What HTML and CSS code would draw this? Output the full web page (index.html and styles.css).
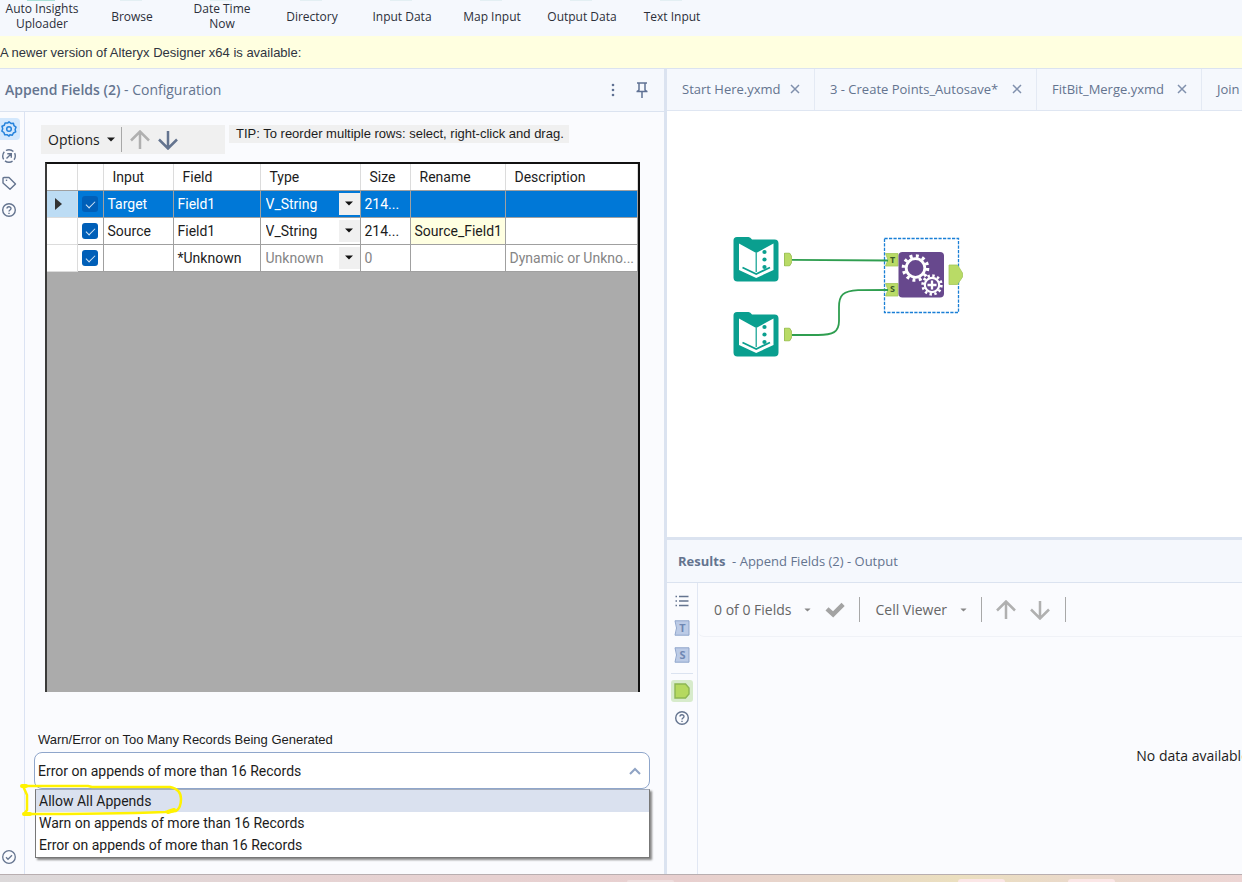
FILE: index.html
```html
<!DOCTYPE html>
<html lang="en">
<head>
<meta charset="utf-8">
<title>Alteryx Designer x64</title>
<link rel="stylesheet" href="styles.css">
</head>
<body>
<svg class="symbols" aria-hidden="true">
  <symbol id="close" viewBox="0 0 10 10"><path d="M1 1l8 8M9 1l-8 8" fill="none" stroke="currentColor" stroke-width="1.5"/></symbol>
  <symbol id="help" viewBox="0 0 16 16"><circle cx="8" cy="8" r="6.3" fill="none" stroke="currentColor" stroke-width="1.4"/><path d="M6 6.600C6 4.200 10 4.200 10 6.500C10 8 8 7.900 8 9.600M8 10.700v1.400" fill="none" stroke="currentColor" stroke-width="1.400"/></symbol>
  <symbol id="caret" viewBox="0 0 8 5"><path d="M0 .5h8L4 4.500z" fill="currentColor"/></symbol>
  <symbol id="up" viewBox="0 0 20 20"><path d="M10 19V1.500M1 10.500l9-9 9 9" fill="none" stroke="currentColor" stroke-width="2.500"/></symbol>
  <symbol id="down" viewBox="0 0 20 20"><path d="M10 1v17.500M1 9.500l9 9 9-9" fill="none" stroke="currentColor" stroke-width="2.500"/></symbol>
  <symbol id="anchor" viewBox="0 0 8 14"><path d="M.5 .5h5l2.500 4v5l-2.500 4h-5z" fill="#b9db66" stroke="#9cc05a"/></symbol>
  <symbol id="book" viewBox="0 0 46 46">
    <path d="M.5 4.500Q.5 1 4 1H15.500q2 0 3.500 2.500H41.500Q45.500 3.500 45.500 7.500V41.500Q45.500 45.500 41.500 45.500H4.500Q.5 45.500 .5 41.500z" fill="#0a9f8f"/>
    <path d="M6 7.500L23.200 17 40.500 7.500V34L23.200 42 6 34z" fill="#fff"/>
    <path d="M9.500 31.500L23.200 38 37 31.500" fill="none" stroke="#0a9f8f" stroke-width="1.800"/>
    <path d="M23.200 17v19" stroke="#0a9f8f" stroke-width="1.200"/>
    <g fill="#0a9f8f"><circle cx="31.500" cy="16" r="2.100"/><circle cx="31.500" cy="23.500" r="2.100"/><circle cx="31.500" cy="31" r="2.100"/></g>
  </symbol>
</svg>

<nav class="tools">
  <button class="tool tool-main">Auto Insights Uploader</button>
  <button class="tool">Browse</button>
  <button class="tool">Date Time<br>Now</button>
  <button class="tool">Directory</button>
  <button class="tool">Input Data</button>
  <button class="tool">Map Input</button>
  <button class="tool">Output Data</button>
  <button class="tool">Text Input</button>
</nav>
<p class="notice">A newer version of Alteryx Designer x64 is available:</p>

<main class="workspace">
  <section class="config">
    <header class="panel-head">
      <h1><b>Append Fields (2)</b> - Configuration</h1>
      <button class="icon-btn" aria-label="More"><svg width="4" height="14" viewBox="0 0 4 14" fill="#5f7194"><circle cx="2" cy="2" r="1.300"/><circle cx="2" cy="7" r="1.300"/><circle cx="2" cy="12" r="1.300"/></svg></button>
      <button class="icon-btn" aria-label="Pin"><svg width="14" height="18" viewBox="0 0 14 18" fill="none" stroke="#5f7194" stroke-width="1.500"><path d="M2 2h10M4 2v7.500M10 2v7.500M1.500 10.500h11M7 10.500V17M4 9l-2 1.500M10 9l2 1.500"/></svg></button>
    </header>
    <div class="config-body">
      <nav class="rail">
        <button class="rail-btn active" aria-label="Configuration"><svg width="16" height="16" viewBox="0 0 16 16" fill="none" stroke="currentColor" stroke-width="1.500" stroke-linejoin="round"><path d="M8 .9l1.900 1.500 2.500-.1.600 2.400 2 1.500-.9 2.300.6 2.400-2.300 1.100-1.100 2.200-2.500-.4L8 15.100l-1.900-1.400-2.400.1-.8-2.300-2-1.400.8-2.400-.7-2.400 2.300-1.100.8-2.300 2.500.2z"/><circle cx="8" cy="8" r="2.300"/></svg></button>
        <button class="rail-btn" aria-label="Navigation"><svg width="16" height="16" viewBox="0 0 16 16" fill="none" stroke="currentColor" stroke-width="1.400"><circle cx="8" cy="8" r="6.300" stroke-dasharray="8 1.900" stroke-dashoffset="4"/><path d="M5.500 10.500l4.500-4.500M6.300 5.700h4v4"/></svg></button>
        <button class="rail-btn" aria-label="Annotation"><svg width="16" height="16" viewBox="0 0 16 16" fill="none" stroke="currentColor" stroke-width="1.400" stroke-linejoin="round"><path d="M2 3.500Q2 2.500 3 2.500h5L14.500 9 9 14.300 2 8z"/><path d="M4.800 5.300h1.400"/></svg></button>
        <button class="rail-btn" aria-label="Help"><svg width="16" height="16"><use href="#help"/></svg></button>
        <button class="rail-btn rail-last" aria-label="Status"><svg width="16" height="16" viewBox="0 0 16 16" fill="none" stroke="currentColor" stroke-width="1.300"><circle cx="8" cy="8" r="6.300"/><path d="M5 8.300l2 2 4-4"/></svg></button>
      </nav>
      <div class="form">
        <div class="grid-tools">
          <div class="strip">
            <button class="options">Options <svg width="8" height="5"><use href="#caret"/></svg></button>
            <i class="sep"></i>
            <button class="icon-btn off" aria-label="Move up"><svg width="20" height="20"><use href="#up"/></svg></button>
            <button class="icon-btn" aria-label="Move down"><svg width="20" height="20"><use href="#down"/></svg></button>
          </div>
          <p class="tip">TIP: To reorder multiple rows: select, right-click and drag.</p>
        </div>
        <div class="grid-box">
          <table class="fields">
            <colgroup><col class="c-mark"><col class="c-check"><col class="c-input"><col class="c-field"><col class="c-type"><col class="c-size"><col class="c-rename"><col></colgroup>
            <thead><tr><th></th><th></th><th>Input</th><th>Field</th><th>Type</th><th>Size</th><th>Rename</th><th>Description</th></tr></thead>
            <tbody>
              <tr class="selected">
                <td class="mark"><svg width="7" height="12" viewBox="0 0 7 12"><path d="M0 0l7 6-7 6z" fill="#333"/></svg></td>
                <td class="tick"><input type="checkbox" checked aria-label="Include Target Field1"></td>
                <td>Target</td><td>Field1</td>
                <td class="type"><span class="combo"><select aria-label="Type of Target Field1"><option>V_String</option></select><i><svg width="8" height="5"><use href="#caret"/></svg></i></span></td>
                <td>214...</td><td></td><td></td>
              </tr>
              <tr>
                <td class="mark"></td>
                <td class="tick"><input type="checkbox" checked aria-label="Include Source Field1"></td>
                <td>Source</td><td>Field1</td>
                <td class="type"><span class="combo"><select aria-label="Type of Source Field1"><option>V_String</option></select><i><svg width="8" height="5"><use href="#caret"/></svg></i></span></td>
                <td>214...</td><td class="renamed">Source_Field1</td><td></td>
              </tr>
              <tr class="unknown">
                <td class="mark"></td>
                <td class="tick"><input type="checkbox" checked aria-label="Include Unknown"></td>
                <td></td><td class="dark">*Unknown</td>
                <td class="type"><span class="combo"><select aria-label="Type of Unknown"><option>Unknown</option></select><i><svg width="8" height="5"><use href="#caret"/></svg></i></span></td>
                <td>0</td><td></td><td>Dynamic or Unkno...</td>
              </tr>
            </tbody>
          </table>
        </div>
        <div class="warn">
          <label for="warn">Warn/Error on Too Many Records Being Generated</label>
          <div class="warn-field">
            <select id="warn"><option>Error on appends of more than 16 Records</option></select>
            <svg width="12" height="8" viewBox="0 0 12 8"><path d="M1 7l5-5 5 5" fill="none" stroke="#8fa3c4" stroke-width="2"/></svg>
          </div>
          <ul class="warn-list" role="listbox" aria-label="Warn/Error choices">
            <li role="option" aria-selected="true">Allow All Appends</li>
            <li role="option" aria-selected="false">Warn on appends of more than 16 Records</li>
            <li role="option" aria-selected="false">Error on appends of more than 16 Records</li>
          </ul>
          <svg class="marker" width="164" height="36" viewBox="0 0 164 36" fill="none" stroke="#fff200" stroke-width="2.500" stroke-linecap="round" stroke-linejoin="round"><path d="M3 3L68 3 72 4H150Q161 6 161 16Q161 25 156 28L145 29Q90 31 4 31L7 27V12L3 3"/><path d="M2 3h4M4 31h6M154 27l-6 2" stroke-width="4"/></svg>
        </div>
      </div>
    </div>
  </section>

  <section class="right">
    <nav class="tabs">
      <div class="tab tab-1"><a href="#start">Start Here.yxmd</a><button aria-label="Close Start Here.yxmd"><svg width="10" height="10"><use href="#close"/></svg></button></div>
      <div class="tab tab-2"><a href="#points">3 - Create Points_Autosave*</a><button aria-label="Close Create Points"><svg width="10" height="10"><use href="#close"/></svg></button></div>
      <div class="tab tab-3"><a href="#fitbit">FitBit_Merge.yxmd</a><button aria-label="Close FitBit_Merge.yxmd"><svg width="10" height="10"><use href="#close"/></svg></button></div>
      <div class="tab"><a href="#join">Join</a></div>
    </nav>
    <div class="canvas">
      <svg class="flow" width="260" height="140" viewBox="0 0 260 140">
        <rect x="164.500" y="13.500" width="74" height="74" fill="none" stroke="#1a7fd6" stroke-width="1.300" stroke-dasharray="3.200 1.300"/>
        <g fill="#b9db66" stroke="#a3c65c" stroke-width=".8">
          <path d="M165.500 28.500H178V41h-12.500l2.500-6.200z"/><path d="M165.500 58.500H178V71h-12.500l2.500-6.200z"/>
          <path d="M229 40h8.500l5 8v4l-5 7.500H229z"/>
        </g>
        <use href="#book" x="13" y="11" width="46" height="46"/>
        <use href="#book" x="13" y="86" width="46" height="46"/>
        <g fill="none" stroke="#2f9e50" stroke-width="1.800"><path d="M71 34.800L168 35.500"/><path d="M71 110H98C113 110 119 107 119 96V82C119 70 123 66 138 65.200L168 65"/></g>
        <use href="#anchor" x="64" y="27.500" width="8" height="14"/>
        <use href="#anchor" x="64" y="102.500" width="8" height="14"/>
        <g class="port"><text x="172.500" y="38.300">T</text><text x="172.500" y="67.300">S</text></g>
        <rect x="178.500" y="27" width="45.500" height="45.500" rx="4" fill="#67488d"/>
        <g fill="none" stroke="#fff">
          <circle cx="195.500" cy="43" r="9.300" stroke-width="2.800"/><circle cx="195.500" cy="43" r="12" stroke-width="3.600" stroke-dasharray="2.900 3.383"/>
          <circle cx="212" cy="60" r="10.500" fill="#67488d" stroke="none"/>
          <circle cx="212" cy="60" r="7.200" stroke-width="2.200"/><circle cx="212" cy="60" r="9.300" stroke-width="2.800" stroke-dasharray="2.400 2.470"/>
          <path d="M212 55.500v9M207.500 60h9" stroke-width="2.300"/>
        </g>
      </svg>
    </div>
    <div class="results">
      <header class="panel-head results-head"><h2><b>Results</b>&nbsp; - Append Fields (2) - Output</h2></header>
      <div class="results-body">
        <nav class="results-rail">
          <button class="rail-btn" aria-label="Messages"><svg width="14" height="14" viewBox="0 0 14 14" stroke="currentColor" stroke-width="1.400"><path d="M4 2.500h9.500M4 7h9.500M4 11.500h9.500M.5 2.500H2M.5 7H2M.5 11.500H2"/></svg></button>
          <button class="rail-btn" aria-label="Target input"><svg width="16" height="16" viewBox="0 0 16 16"><path d="M1 .8h14v14.400H1q3-7.200 0-14.400z" fill="#bccbe6" stroke="#8fa5cb"/><text class="port-in" x="8.500" y="12">T</text></svg></button>
          <button class="rail-btn" aria-label="Source input"><svg width="16" height="16" viewBox="0 0 16 16"><path d="M1 .8h14v14.400H1q3-7.200 0-14.400z" fill="#bccbe6" stroke="#8fa5cb"/><text class="port-in" x="8.500" y="12">S</text></svg></button>
          <hr>
          <button class="rail-btn output" aria-label="Output"><svg width="16" height="16" viewBox="0 0 16 16"><path d="M1 1h10.500L15 5v6l-3.500 4H1z" fill="#b5d95f" stroke="#8db653" stroke-width="1.400"/></svg></button>
          <button class="rail-btn" aria-label="Help"><svg width="16" height="16"><use href="#help"/></svg></button>
        </nav>
        <div class="results-main">
          <div class="results-tools">
            <button class="menu">0 of 0 Fields <svg width="7" height="4" viewBox="0 0 8 5"><use href="#caret"/></svg></button>
            <button class="icon-btn off" aria-label="Apply"><svg width="20" height="16" viewBox="0 0 20 16"><path d="M.5 8.500l3-3.300L8 9.300 16.500.7 19.700 4 8.200 15.500z" fill="#a3a3a3"/></svg></button>
            <i class="sep"></i>
            <button class="menu viewer">Cell Viewer <svg width="7" height="4" viewBox="0 0 8 5"><use href="#caret"/></svg></button>
            <i class="sep"></i>
            <button class="icon-btn off" aria-label="Previous"><svg width="20" height="20"><use href="#up"/></svg></button>
            <button class="icon-btn off next" aria-label="Next"><svg width="20" height="20"><use href="#down"/></svg></button>
            <i class="sep"></i>
          </div>
          <div class="empty"><span>No data available</span></div>
        </div>
      </div>
    </div>
  </section>
</main>
<footer class="taskbar"><i></i><i></i><i></i></footer>
</body>
</html>
```
FILE: styles.css
```css
* { box-sizing: border-box; }
body {
  margin: 0;
  height: 100vh;
  display: flex;
  flex-direction: column;
  overflow: hidden;
  background: #fafbfe;
  color: #1c1c1c;
  font: 14px/18px Roboto, "Liberation Sans", sans-serif;
}
h1, h2, p, ul { margin: 0; padding: 0; }
button, select { font: inherit; color: inherit; border: 0; padding: 0; background: none; }
svg { display: block; flex: none; }
.symbols { position: absolute; width: 0; height: 0; }

.tools {
  display: flex;
  height: 36px;
  flex: none;
  margin-left: -4px;
  background: #f5f8fd;
}
.tool {
  width: 90px;
  padding: 0 3px 4px 5px;
  display: flex;
  flex-direction: column;
  align-items: center;
  justify-content: center;
  font: 12px/15px "Open Sans", sans-serif;
  color: #2c2f3a;
  background: linear-gradient(#e3eff3, #e3eff3) center top / 22px 1px no-repeat;
}
.tool-main { background: linear-gradient(#a8ded6, #a8ded6) center top / 28px 1px no-repeat; }
.notice {
  flex: none;
  height: 32px;
  background: #ffffe0;
  color: #2f3440;
  font: 13px/34px "Liberation Sans", sans-serif;
}

.workspace {
  flex: 1;
  min-height: 0;
  display: grid;
  grid-template-columns: minmax(0, 664fr) minmax(0, 578fr);
  border-top: 1px solid #dbe3f0;
}
.config { display: flex; flex-direction: column; min-height: 0; }
.panel-head {
  height: 43px;
  flex: none;
  display: flex;
  align-items: center;
  padding: 0 15px 0 5px;
  gap: 20px;
  background: #f5f8fd;
  border-bottom: 1px solid #dbe3f0;
  color: #64748f;
}
.panel-head h1 { flex: 1; font: 14px/18px "Open Sans", sans-serif; }
.panel-head h2 { flex: 1; font: 13px/18px "Open Sans", sans-serif; }
.panel-head b { font-weight: 600; }
.panel-head h2 b { font-weight: 700; }
.icon-btn { color: #64748f; display: flex; }
.icon-btn.off { color: #b0b0b0; }
.config-body { flex: 1; min-height: 0; display: flex; }
.rail {
  width: 25px;
  flex: none;
  display: flex;
  flex-direction: column;
  gap: 5px;
  padding: 6px 0;
  border-right: 1px solid #dbe3f3;
}
.rail-btn {
  width: 20px;
  height: 22px;
  padding-left: 1px;
  display: flex;
  align-items: center;
  color: #64748f;
}
.rail-btn.active { background: #d3e8fd; color: #2583dc; border-radius: 0 4px 4px 0; }
.rail-last { margin-top: auto; }

.form { flex: 1; min-width: 0; display: flex; flex-direction: column; padding: 13px 14px 16px 9px; }
.grid-tools { display: flex; align-items: flex-start; gap: 4px; padding-left: 7px; height: 37px; }
.strip {
  width: 184px;
  height: 29px;
  display: flex;
  align-items: center;
  gap: 8px;
  padding-left: 7px;
  background: #f0f0f0;
}
.options { display: flex; align-items: center; gap: 7px; margin-right: -2px; font: 14px/18px "Open Sans", sans-serif; }
.sep { width: 1px; height: 25px; background: #a8a8a8; }
.tip { padding: 0 5px 0 7px; background: #f0f0f0; font: 13px/18px "Liberation Sans", sans-serif; }
.grid-box {
  flex: 1;
  margin: 0 10px 0 11px;
  background: #ababab;
  border: 2px solid #111;
  border-left-color: #3a3a3a;
  border-bottom: 0;
}
.fields { width: 100%; table-layout: fixed; border-collapse: collapse; background: #fff; }
.c-mark { width: 30px; }
.c-check { width: 26px; }
.c-input { width: 70px; }
.c-field { width: 87px; }
.c-type { width: 100px; }
.c-size { width: 50px; }
.c-rename { width: 95px; }
.fields th {
  height: 26px;
  padding: 1px 0 0 9px;
  text-align: left;
  font-weight: 400;
  border-right: 1px solid #dcdcdc;
  border-bottom: 1px solid #a0a0a0;
}
.fields td {
  height: 27px;
  padding: 0 0 0 4px;
  white-space: nowrap;
  overflow: hidden;
  border: 1px solid #a0a0a0;
}
.fields td.mark { padding-left: 8px; border-left: 0; border-color: #dcdcdc; }
.selected td { background: #0078d7; color: #fff; }
.selected td.mark { background: #bcdcf4; }
.unknown td { color: #858585; }
.unknown td.dark { color: #1c1c1c; }
.fields td.renamed { background: #ffffe1; }
.fields td.tick { padding: 0 1px 0 0; }
.tick input {
  appearance: none;
  display: block;
  width: 16px;
  height: 16px;
  margin: 0 auto;
  border-radius: 3px;
  background: #005fb8;
}
.tick input::after {
  content: "";
  display: block;
  width: 8px;
  height: 4px;
  margin: 5px 4px;
  border: solid #d5e6f6;
  border-width: 0 0 1px 1px;
  transform: rotate(-45deg);
}
.fields td.type { padding: 0 0 0 5px; }
.combo { display: grid; grid-template: 22px / 1fr; }
.combo select { grid-area: 1 / 1; appearance: none; width: 100%; }
.combo i {
  grid-area: 1 / 1;
  justify-self: end;
  width: 21px;
  display: flex;
  align-items: center;
  justify-content: center;
  background: #f0f0f0;
  color: #111;
  pointer-events: none;
}

.warn { position: relative; margin-top: 36px; }
.warn label { display: block; padding-left: 4px; font: 13px/24px "Liberation Sans", sans-serif; }
.warn-field {
  height: 37px;
  display: grid;
  align-items: center;
  background: #fff;
  border: 1px solid #8fa6cb;
  border-radius: 8px;
}
.warn-field select { grid-area: 1 / 1; appearance: none; width: 100%; height: 35px; padding-left: 3px; }
.warn-field svg { grid-area: 1 / 1; justify-self: end; margin-right: 8px; pointer-events: none; }
.warn-list {
  list-style: none;
  margin-left: 1px;
  padding-bottom: 1px;
  border: 1px solid #777;
  border-top-color: #a4adbd;
  background: #fff;
  box-shadow: 2px 2px 2px #888;
}
.warn-list li { padding-left: 3px; line-height: 22px; }
.warn-list li[aria-selected="true"] { background: #dae1ef; }
.marker { position: absolute; left: -14px; top: 55px; }

.right {
  min-height: 0;
  display: grid;
  grid-template-rows: 42px minmax(0, 426fr) minmax(0, 337fr);
  border-left: 3px solid #dbe3f0;
  overflow: hidden;
}
.tabs { display: flex; background: #f5f8fd; border-bottom: 1px solid #dfe6f2; overflow: hidden; }
.tab {
  flex: none;
  display: flex;
  align-items: center;
  justify-content: space-between;
  padding: 0 14px 2px 15px;
  border-right: 1px solid #e4eaf4;
  font: 13px/18px "Open Sans", sans-serif;
  white-space: nowrap;
}
.tab:last-child { border: 0; }
.tab-1 { width: 148px; }
.tab-2 { width: 222px; }
.tab-3 { width: 165px; }
.tab a { color: #64748f; text-decoration: none; }
.tab button { color: #8090ad; }
.canvas { position: relative; background: #fff; overflow: hidden; }
.flow { position: absolute; left: 53px; top: 114px; }
.port { font: 700 9px "Open Sans", sans-serif; fill: #3c5a2a; text-anchor: middle; }
.port-in { font: 700 11px "Open Sans", sans-serif; fill: #6f87b3; text-anchor: middle; }

.results { display: flex; flex-direction: column; border-top: 3px solid #dbe3f0; min-height: 0; }
.results-head { padding-left: 11px; }
.results-body { flex: 1; min-height: 0; display: flex; }
.results-rail {
  width: 31px;
  flex: none;
  display: flex;
  flex-direction: column;
  align-items: center;
  gap: 5px;
  padding: 7px 1px 0 0;
  border-right: 1px solid #e1e7f3;
}
.results-rail .rail-btn { width: 22px; padding: 0; justify-content: center; }
.results-rail .output { background: #d7ebcb; border-radius: 3px; }
.results-rail hr { width: 22px; margin: 2px 0 1px; border: 0; border-top: 1px solid #dbe3f0; }
.results-main { flex: 1; min-width: 0; display: flex; flex-direction: column; }
.results-tools {
  height: 54px;
  flex: none;
  display: flex;
  align-items: center;
  gap: 14px;
  padding-left: 16px;
  border-bottom: 1px solid #f0f2f7;
  border-radius: 0 0 0 6px;
}
.menu { display: flex; align-items: center; gap: 13px; font: 14px/18px "Open Sans", sans-serif; color: #666; }
.menu.viewer { margin-left: 1px; }
.menu svg { color: #888; }
.next { margin-right: 1px; }
.empty {
  flex: 1;
  display: flex;
  align-items: center;
  justify-content: flex-end;
  overflow: hidden;
  font: 14px/18px "Open Sans", sans-serif;
  white-space: nowrap;
}
.empty span { margin-right: -7px; }

.taskbar {
  flex: none;
  height: 8px;
  display: flex;
  align-items: flex-end;
  padding-left: 50%;
  overflow: hidden;
  border-top: 1px solid #b8aeb0;
  background: linear-gradient(90deg, #dcd9da, #e6d3d3 25%, #e8cfcf 55%, #e8d8c8 68%, #ebdfbf 77%, #ead8cc 88%, #edd5d4);
}
.taskbar i { width: 47px; height: 3px; border-radius: 4px 4px 0 0; background: #fbe6e6; }
.taskbar i:first-child { height: 2px; margin-right: 284px; margin-left: 6px; background: #eedddd; }
.taskbar i:last-child { margin-left: 63px; }
```
